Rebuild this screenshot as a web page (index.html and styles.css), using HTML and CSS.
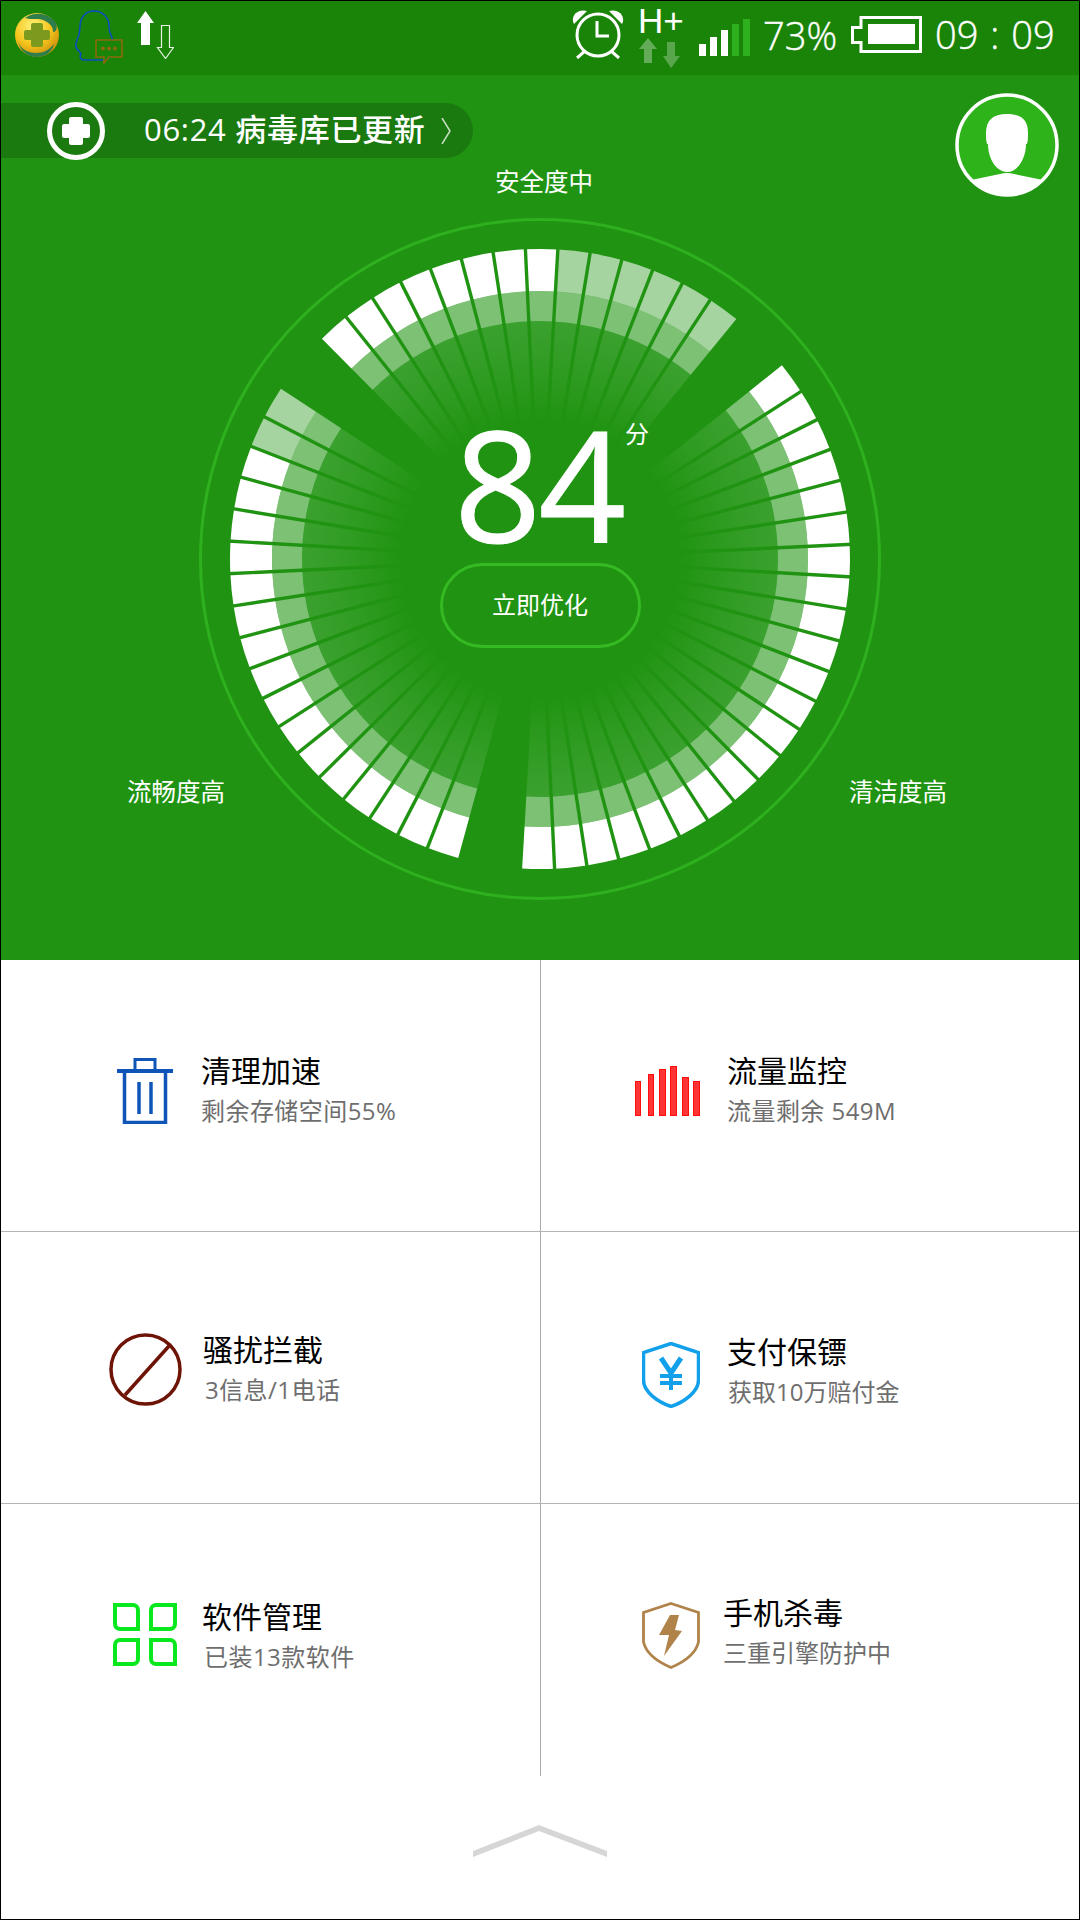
FILE: index.html
```html
<!DOCTYPE html>
<html lang="zh-CN">
<head>
    <meta charset="UTF-8">
    <meta name="viewport" content="width=device-width, initial-scale=1.0">
    <title>手机安全</title>
    <link rel="stylesheet" href="styles.css">
</head>
<body>
    <section class="hero">
        <div class="status-bar">
            <svg class="ic-logo" viewBox="0 0 44 44">
                <defs>
                    <radialGradient id="logoFill" cx="0.4" cy="0.3" r="0.75">
                        <stop offset="0" stop-color="#fff27a"/>
                        <stop offset="0.55" stop-color="#f5c51c"/>
                        <stop offset="1" stop-color="#c98a0c"/>
                    </radialGradient>
                </defs>
                <circle cx="22" cy="22" r="22" fill="url(#logoFill)"/>
                <path d="M10 5a22 22 0 0 1 31 5c2 5 0 9-3 9 1-7-9-14-17-13-4 0-8 0-11-1z" fill="#2f7d4a"/>
                <path d="M3 28c2 8 10 12 18 12 8 0 13-3 18-9-2 9-10 13-18 13-8 0-16-6-18-16z" fill="#2f7d4a"/>
                <path d="M18 10h8a2 2 0 0 1 2 2v5h5a2 2 0 0 1 2 2v6a2 2 0 0 1-2 2h-5v5a2 2 0 0 1-2 2h-8a2 2 0 0 1-2-2v-5h-5a2 2 0 0 1-2-2v-6a2 2 0 0 1 2-2h5v-5a2 2 0 0 1 2-2z" fill="#7c9a1e"/>
            </svg>
            <svg class="ic-qq" viewBox="0 0 48 54">
                <path d="M19 1c-9 0-14 7-14 16 0 5-1 9-3 13-2 5-1 9 2 11l2 3c-2 3 0 6 3 6h22c8-5 9-13 6-22-2-4-3-7-3-12 0-8-6-15-15-15z" fill="none" stroke="#0a4cc4" stroke-width="1.5"/>
                <path d="M21 30h26v17H34l-5 6 0-6h-8z" fill="#1a8409" stroke="#8a6a0c" stroke-width="1.6"/>
                <circle cx="28" cy="38.500" r="2" fill="#8a6a0c"/>
                <circle cx="34" cy="38.500" r="2" fill="#8a6a0c"/>
                <circle cx="40" cy="38.500" r="2" fill="#8a6a0c"/>
            </svg>
            <svg class="ic-traffic" viewBox="0 0 37 48">
                <path d="M8.500 0L17 12h-4v22H4V12H0z" fill="#fff"/>
                <path d="M24.500 14.500h8v22h4l-8 11-8-11h4z" fill="none" stroke="#e6f3e3" stroke-width="1.200"/>
            </svg>

            <svg class="ic-alarm" viewBox="0 0 52 50">
                <path d="M2 15C-2 8 5-1 15 2z" fill="#fff"/>
                <path d="M50 15C54 8 47-1 37 2z" fill="#fff"/>
                <circle cx="26" cy="26" r="21" fill="none" stroke="#fff" stroke-width="3"/>
                <path d="M25 12v15h12" fill="none" stroke="#fff" stroke-width="3"/>
                <path d="M13 42l-8 7M39 42l8 7" stroke="#fff" stroke-width="3"/>
            </svg>
            <div class="net">
                <span class="net-label">H+</span>
                <svg class="ic-data" viewBox="0 0 43 30">
                    <path d="M10 0l9 11h-5v14H6V11H1z" fill="#fff" opacity="0.32"/>
                    <path d="M29 4h8v14h5L33 30 25 18h4z" fill="#fff" opacity="0.28"/>
                </svg>
            </div>
            <div class="signal">
                <span class="bar bar-1"></span>
                <span class="bar bar-2"></span>
                <span class="bar bar-3"></span>
                <span class="bar bar-4 off"></span>
                <span class="bar bar-5 off"></span>
            </div>
            <span class="status-text batt-pct">73%</span>
            <svg class="ic-battery" viewBox="0 0 71 37">
                <path d="M10 1.500h59.500v34H10v-9H1.500v-15H10z" fill="none" stroke="#fff" stroke-width="3"/>
                <rect x="17" y="8" width="47" height="20" fill="#fff"/>
            </svg>
            <span class="status-text clock">09 : 09</span>
        </div>

        <div class="stage">
            <div class="top-row">
                <div class="virus-pill">
                    <svg class="ic-shield-plus" viewBox="0 0 58 58">
                        <circle cx="29" cy="29" r="26.500" fill="none" stroke="#fff" stroke-width="5"/>
                        <path d="M40 9l7 8M11 41l7 8" stroke="#1b7a0f" stroke-width="2"/>
                        <path d="M24 15h10a2 2 0 0 1 2 2v5h5a2 2 0 0 1 2 2v10a2 2 0 0 1-2 2h-5v5a2 2 0 0 1-2 2H24a2 2 0 0 1-2-2v-5h-5a2 2 0 0 1-2-2V24a2 2 0 0 1 2-2h5v-5a2 2 0 0 1 2-2z" fill="#fff"/>
                    </svg>
                    <span class="pill-text">06:24 病毒库已更新</span>
                    <svg class="ic-chevron" viewBox="0 0 10 26">
                        <path d="M1 0l8 13-8 13" fill="none" stroke="#c9dfc5" stroke-width="1.500"/>
                    </svg>
                </div>
                <div class="avatar">
                    <svg viewBox="0 0 104 104">
                        <circle cx="52" cy="52" r="50" fill="#2eb31b" stroke="#fff" stroke-width="3.500"/>
                        <path d="M52 21c-14 0-21 6-21 19 0 4 0 8 1 11h1c0 14 8 28 19 28s19-14 19-28h1c1-3 1-7 1-11 0-13-7-19-21-19z" fill="#fff"/>
                        <path d="M16 87l29-6q7-2 14 0l29 6A51 51 0 0 1 16 87z" fill="#fff"/>
                    </svg>
                </div>
            </div>

            <div class="dial">
                <svg id="dial-svg" viewBox="0 0 700 700">
                    <defs>
                        <radialGradient id="fadeBand" gradientUnits="userSpaceOnUse" cx="350" cy="350" r="238">
                            <stop offset="0.58" stop-color="#fff" stop-opacity="0"/>
                            <stop offset="0.85" stop-color="#fff" stop-opacity="0.085"/>
                            <stop offset="1" stop-color="#fff" stop-opacity="0.12"/>
                        </radialGradient>
                    </defs>
                    <circle cx="350" cy="350" r="339.500" fill="none" stroke="#2fb01f" stroke-width="3"/>
                </svg>
                <div class="dial-center">
                    <div class="score">84<span class="score-unit">分</span></div>
                    <button class="optimize">立即优化</button>
                </div>
            </div>

            <span class="dial-label label-safe">安全度中</span>
            <span class="dial-label label-speed">流畅度高</span>
            <span class="dial-label label-clean">清洁度高</span>
        </div>
    </section>

    <section class="tools">
        <div class="tool tool-clean">
            <svg class="ic-trash" viewBox="0 0 56 66">
                <path d="M18 13V1.500h20V13" fill="none" stroke="#0f55b8" stroke-width="3"/>
                <path d="M0 13h56" stroke="#0f55b8" stroke-width="4"/>
                <path d="M7.500 13v51.500h41V13" fill="none" stroke="#0f55b8" stroke-width="3.500"/>
                <path d="M22 24v32M34 24v32" stroke="#0f55b8" stroke-width="3.500"/>
            </svg>
            <div class="tool-text">
                <div class="tool-title">清理加速</div>
                <div class="tool-sub">剩余存储空间55%</div>
            </div>
        </div>
        <div class="tool tool-flow">
            <svg class="ic-bars" viewBox="0 0 65 50">
                <rect x="0.500" y="15.500" width="5" height="34"/>
                <rect x="13.500" y="8.500" width="5" height="41"/>
                <rect x="24.500" y="3.500" width="6" height="46"/>
                <rect x="35.500" y="0.500" width="6" height="49"/>
                <rect x="47.500" y="11.500" width="6" height="38"/>
                <rect x="58.500" y="15.500" width="6" height="34"/>
            </svg>
            <div class="tool-text">
                <div class="tool-title">流量监控</div>
                <div class="tool-sub">流量剩余 549M</div>
            </div>
        </div>
        <div class="tool tool-block">
            <svg class="ic-block" viewBox="0 0 73 73">
                <circle cx="36.500" cy="36.500" r="34.500" fill="none" stroke="#6e1407" stroke-width="3.500"/>
                <path d="M60 13L16 62" stroke="#6e1407" stroke-width="3.500"/>
            </svg>
            <div class="tool-text">
                <div class="tool-title">骚扰拦截</div>
                <div class="tool-sub">3信息/1电话</div>
            </div>
        </div>
        <div class="tool tool-pay">
            <svg class="ic-pay" viewBox="0 0 58 66">
                <path d="M29 1.500L56.500 10.500V38C56.500 50 42 60 29 64.500 16 60 1.500 50 1.500 38V10.500z" fill="none" stroke="#12a0ea" stroke-width="3.500"/>
                <path d="M19 16l10 15 10-15" fill="none" stroke="#12a0ea" stroke-width="5"/>
                <path d="M29 30v18M18 34h22M18 41h22" stroke="#12a0ea" stroke-width="4"/>
            </svg>
            <div class="tool-text">
                <div class="tool-title">支付保镖</div>
                <div class="tool-sub">获取10万赔付金</div>
            </div>
        </div>
        <div class="tool tool-apps">
            <svg class="ic-apps" viewBox="0 0 64 63">
                <path d="M2 2h18a5 5 0 0 1 5 5v19H7a5 5 0 0 1-5-5z"/>
                <path d="M62 2v19a5 5 0 0 1-5 5H38V7a5 5 0 0 1 5-5z"/>
                <path d="M25 37v19a5 5 0 0 1-5 5H2V42a5 5 0 0 1 5-5z"/>
                <path d="M38 37h19a5 5 0 0 1 5 5v19H43a5 5 0 0 1-5-5z"/>
            </svg>
            <div class="tool-text">
                <div class="tool-title">软件管理</div>
                <div class="tool-sub">已装13款软件</div>
            </div>
        </div>
        <div class="tool tool-virus">
            <svg class="ic-virus" viewBox="0 0 58 67">
                <path d="M29 1.500L56.500 10.500V40C54 51 42 60 29 65.500 16 60 4 51 1.500 40V10.500z" fill="none" stroke="#b0834a" stroke-width="2.800"/>
                <path d="M28 13h9l-4 15 7 1-18 25 5-21H17z" fill="#b0834a"/>
            </svg>
            <div class="tool-text">
                <div class="tool-title">手机杀毒</div>
                <div class="tool-sub">三重引擎防护中</div>
            </div>
        </div>
    </section>

    <footer class="more">
        <svg class="ic-up" viewBox="0 0 134 32">
            <path d="M0 26L66 0l68 26v6L66 6 0 32z" fill="#d6d6d6"/>
        </svg>
    </footer>

    <script src="dial.js"></script>
</body>
</html>
```

FILE: styles.css
```css
* {
    box-sizing: border-box;
}
body {
    font-family: "Open Sans", "Noto Sans CJK SC", sans-serif;
    width: 1080px;
    height: 1920px;
    margin: 0;
    border: 1px solid #000;
    background: #fff;
    overflow: hidden;
}
svg {
    display: block;
    flex: none;
}

/* green top part */
.hero {
    height: 959px;
    background: #209412;
    color: #fff;
}
.status-bar {
    display: flex;
    align-items: flex-start;
    height: 74px;
    background: #1a8409;
}
.ic-logo {
    width: 44px;
    height: 44px;
    margin: 12px 0 0 14px;
}
.ic-qq {
    width: 48px;
    height: 54px;
    margin: 9px 0 0 16px;
}
.ic-traffic {
    width: 37px;
    height: 48px;
    margin: 10px 0 0 14px;
}
.ic-alarm {
    width: 52px;
    height: 50px;
    margin: 8px 0 0 398px;
}
.net {
    width: 48px;
    margin: 3px 0 0 14px;
}
.net-label {
    display: block;
    height: 34px;
    font-family: "Liberation Sans", sans-serif;
    font-size: 35px;
    line-height: 34px;
    white-space: nowrap;
}
.ic-data {
    width: 43px;
    height: 30px;
}
.signal {
    display: flex;
    align-items: flex-end;
    gap: 4px;
    height: 37px;
    margin: 18px 0 0 13px;
}
.bar {
    width: 7px;
    background: #fff;
}
.bar.off {
    background: #2fb01f;
}
.bar-1 { height: 12px; }
.bar-2 { height: 19px; }
.bar-3 { height: 26px; }
.bar-4 { height: 32px; }
.bar-5 { height: 37px; }
.status-text {
    font-size: 38px;
    font-weight: 300;
    line-height: 50px;
    margin-top: 9px;
    white-space: nowrap;
    -webkit-text-stroke: 0.4px #fff;
}
.batt-pct {
    margin-left: 13px;
}
.ic-battery {
    width: 71px;
    height: 37px;
    margin: 15px 0 0 14px;
}
.clock {
    margin-left: 13px;
    margin-top: 8px;
    word-spacing: 2px;
}

.stage {
    position: relative;
    height: 885px;
}
.top-row {
    display: flex;
    justify-content: space-between;
    align-items: flex-start;
}
.virus-pill {
    display: flex;
    align-items: center;
    width: 472px;
    height: 55px;
    margin-top: 28px;
    border-radius: 0 28px 28px 0;
    background: #1b7a0f;
}
.ic-shield-plus {
    width: 58px;
    height: 58px;
    margin-left: 46px;
}
.pill-text {
    margin: 0 0 6px 39px;
    font-size: 31px;
    font-weight: 500;
    letter-spacing: 0.700px;
    white-space: nowrap;
}
.ic-chevron {
    width: 10px;
    height: 26px;
    margin-left: 15px;
}
.avatar {
    width: 104px;
    height: 104px;
    margin: 18px 20px 0 0;
}

/* score dial */
.dial {
    position: absolute;
    left: 189px;
    top: 134px;
    width: 700px;
    height: 700px;
}
#dial-svg {
    width: 700px;
    height: 700px;
}
.dial-center {
    position: absolute;
    left: 0;
    right: 0;
    top: 195px;
    display: flex;
    flex-direction: column;
    align-items: center;
}
.score {
    position: relative;
    margin-left: -3px;
    font-size: 153px;
    line-height: 160px;
    letter-spacing: -3px;
    -webkit-text-stroke: 1px #fff;
}
.score-unit {
    position: absolute;
    left: 171px;
    top: 14px;
    font-size: 24px;
    line-height: 32px;
    letter-spacing: 0;
    -webkit-text-stroke: 0;
}
.optimize {
    width: 201px;
    height: 85px;
    margin-top: -1px;
    padding: 0 0 4px;
    border: 3px solid #35ba23;
    border-radius: 43px;
    background: none;
    color: #fff;
    font-family: inherit;
    font-size: 24px;
}
.dial-label {
    position: absolute;
    font-size: 24.500px;
    line-height: 32px;
    white-space: nowrap;
}
.label-safe {
    left: 494px;
    top: 91px;
}
.label-speed {
    left: 126px;
    top: 701px;
}
.label-clean {
    left: 848px;
    top: 701px;
}

/* tool grid */
.tools {
    display: grid;
    grid-template-columns: 540px 538px;
    grid-auto-rows: 272px;
}
.tool {
    display: flex;
    align-items: center;
    border-bottom: 1px solid #b4b4b4;
}
.tool:nth-child(odd) {
    border-right: 1px solid #aaa;
}
.tool:nth-last-child(-n+2) {
    border-bottom: none;
}
.tool-text {
    margin-left: 28px;
}
.tool-title {
    color: #000;
    font-size: 30px;
    line-height: 40px;
    white-space: nowrap;
}
.tool-sub {
    color: #6e6e6e;
    font-size: 24px;
    letter-spacing: 0.450px;
    line-height: 40px;
    white-space: nowrap;
}
.tool-clean { padding: 0 0 10px 116px; }
.tool-flow { padding: 0 0 10px 94px; }
.tool-block { padding: 4px 0 0 108px; }
.tool-pay { padding: 9px 0 0 101px; }
.tool-apps { padding: 0 0 6px 112px; }
.tool-virus { padding: 0 0 14px 101px; }
.ic-trash {
    width: 56px;
    height: 66px;
}
.ic-bars {
    width: 65px;
    height: 50px;
    fill: #ff3434;
    stroke: #ff0d0d;
}
.ic-block {
    width: 73px;
    height: 73px;
}
.ic-pay {
    width: 58px;
    height: 66px;
    margin-top: 5px;
}
.ic-apps {
    width: 64px;
    height: 63px;
    margin-bottom: 5px;
    fill: none;
    stroke: #08e81c;
    stroke-width: 4;
}
.ic-virus {
    width: 58px;
    height: 67px;
    margin-top: 4px;
}
.tool-block .tool-text { margin-left: 21px; }
.tool-flow .tool-text { margin-left: 27px; }
.tool-virus .tool-text { margin-left: 23px; }
.tool-apps .tool-text { margin-left: 25px; }
.tool-apps .tool-sub { padding-left: 2px; }
.tool-block .tool-sub { padding-left: 2px; }
.tool-pay .tool-text { margin-left: 27px; }
.tool-pay .tool-sub { padding-left: 1px; letter-spacing: 0; }
.tool-virus .tool-sub { letter-spacing: 0; }

.more {
    display: flex;
    justify-content: center;
    padding-top: 49px;
}
.ic-up {
    width: 134px;
    height: 32px;
}
```

FILE: dial.js
```js
// builds the score dial: white tips, pale band and a fading inner wedge
const cx = 350, cy = 350;
const svg = document.getElementById('dial-svg');
const NS = 'http://www.w3.org/2000/svg';

function pt(r, deg) {
    const a = deg * Math.PI / 180;
    return (cx + r * Math.sin(a)).toFixed(2) + ' ' + (cy - r * Math.cos(a)).toFixed(2);
}

function sector(r1, r2, from, to, fill) {
    const large = to - from > 180 ? 1 : 0;
    const p = document.createElementNS(NS, 'path');
    p.setAttribute('d', 'M' + pt(r2, from) + 'A' + r2 + ' ' + r2 + ' 0 ' + large + ' 1 ' + pt(r2, to) +
        'L' + pt(r1, to) + 'A' + r1 + ' ' + r1 + ' 0 ' + large + ' 0 ' + pt(r1, from) + 'Z');
    p.setAttribute('fill', fill);
    svg.appendChild(p);
}

// from, to: whole group; dimFrom, dimTo: the part that is not yet earned
const groups = [
    { from: -44.7, to: 39.3, dimFrom: 3.3, dimTo: 39.3 },
    { from: 51.3, to: 183.3 },
    { from: 195.3, to: 303.3, dimFrom: 291.3, dimTo: 303.3 }
];

groups.forEach(function (g) {
    sector(100, 238, g.from, g.to, 'url(#fadeBand)');
    for (let a = g.from; a < g.to - 0.1; a += 6) {
        const dim = g.dimFrom !== undefined && a >= g.dimFrom - 0.1 && a < g.dimTo;
        sector(238, 268, a, a + 6, 'rgba(255,255,255,0.42)');
        sector(268, 310, a, a + 6, dim ? 'rgba(255,255,255,0.6)' : '#fff');
    }
    for (let a = g.from + 6; a < g.to - 0.1; a += 6) {
        const line = document.createElementNS(NS, 'line');
        const p1 = pt(110, a).split(' ');
        const p2 = pt(313, a).split(' ');
        line.setAttribute('x1', p1[0]);
        line.setAttribute('y1', p1[1]);
        line.setAttribute('x2', p2[0]);
        line.setAttribute('y2', p2[1]);
        line.setAttribute('stroke', '#209412');
        line.setAttribute('stroke-width', '3.4');
        svg.appendChild(line);
    }
});
```
